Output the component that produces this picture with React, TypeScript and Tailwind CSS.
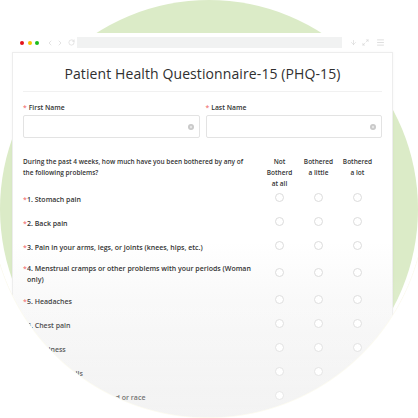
import React from 'react';
import { ChevronLeft, ChevronRight, RotateCw, ArrowDown, Maximize2, Menu } from 'lucide-react';

const problems = [
  { label: '1. Stomach pain' },
  { label: '2. Back pain' },
  { label: '3. Pain in your arms, legs, or joints (knees, hips, etc.)' },
  { label: '4. Menstrual cramps or other problems with your periods (Woman only)' },
  { label: '5. Headaches' },
  { label: '6. Chest pain' },
  { label: '7. Dizziness' },
  { label: '8. Fainting spells' },
  { label: '9. Feeling your heart pound or race' },
];

function ClearIcon() {
  return (
    <svg width="6" height="6" viewBox="0 0 10 10" className="shrink-0">
      <circle cx="5" cy="5" r="5" fill="#c9c9c9" />
      <circle cx="5" cy="5" r="2" fill="#e6e6e6" />
    </svg>
  );
}

function Radio() {
  return <div className="w-[9px] h-[9px] rounded-full border border-[#dcdcdc] bg-white mx-auto -translate-y-[2px]"></div>;
}

export default function App() {
  return (
    <div className="relative w-[418px] h-[418px] overflow-hidden bg-white font-['Open_Sans',sans-serif]">
      {/* Green backdrop */}
      <div className="absolute inset-0 rounded-full bg-[#dbebc7]"></div>

      <div className="relative pt-[33px] pl-[12px]">
        <div className="w-[381px]">
          {/* Browser bar */}
          <div className="h-[19px] bg-white flex items-center px-[8px] gap-[2px]">
            <div className="flex items-center gap-[3.5px] mr-[5px]">
              <span className="w-[4px] h-[4px] rounded-full bg-[#e3141b]"></span>
              <span className="w-[4px] h-[4px] rounded-full bg-[#f6c500]"></span>
              <span className="w-[4px] h-[4px] rounded-full bg-[#1dbd1d]"></span>
            </div>
            <ChevronLeft size={8} strokeWidth={1.5} className="text-[#c6c6c6]" />
            <ChevronRight size={8} strokeWidth={1.5} className="text-[#c6c6c6]" />
            <RotateCw size={7} strokeWidth={1.5} className="text-[#c6c6c6] ml-[2px]" />
            <div className="h-[11px] w-[265px] bg-[#f1f2f2]"></div>
            <ArrowDown size={7} strokeWidth={1.5} className="text-[#c6c6c6] ml-[6px]" />
            <Maximize2 size={7} strokeWidth={1.5} className="text-[#c6c6c6] ml-[3px]" />
            <Menu size={9} strokeWidth={1.5} className="text-[#c6c6c6] ml-[5px]" />
          </div>

          {/* Form card */}
          <div className="bg-[linear-gradient(to_bottom,#ffffff_52%,#ededed_100%)] border border-[#ededed] shadow-[0_0_3px_rgba(0,0,0,0.04)] px-[10px] h-[366px] overflow-hidden">
            <div className="pt-[11px] pb-[7px] border-b border-[#f1f1f1] text-center">
              <h1 className="text-[14px] leading-[20px] text-[#2f2f2f] tracking-[0.1px]">Patient Health Questionnaire-15 (PHQ-15)</h1>
            </div>

            <div className="grid grid-cols-2 gap-x-[6px] mt-[11px]">
              {['First Name', 'Last Name'].map((name) => (
                <div key={name}>
                  <div className="text-[6.8px] leading-[10px] font-semibold text-[#333] flex items-center">
                    <span className="text-[#f27b7b] mr-[2px]">*</span>
                    {name}
                  </div>
                  <div className="mt-[2px] h-[23px] border border-[#e3e3e3] rounded-[2px] flex items-center justify-end pr-[5px]">
                    <ClearIcon />
                  </div>
                </div>
              ))}
            </div>

            <div className="grid grid-cols-[1fr_39px_39px_39px] mr-[5px] mt-[18px] text-[6.5px] leading-[11px] font-semibold text-[#333]">
              <div className="pr-[6px]">During the past 4 weeks, how much have you been bothered by any of the following problems?</div>
              <div className="text-center px-[4px]">Not Botherd at all</div>
              <div className="text-center px-[4px]">Bothered a little</div>
              <div className="text-center px-[4px]">Bothered a lot</div>
            </div>

            <div className="mr-[5px] -mt-[2px] flex flex-col">
              {problems.map((p) => (
                <div key={p.label} className="grid grid-cols-[1fr_39px_39px_39px] items-center min-h-[24px] py-[4px] text-[7px] leading-[11px] font-semibold text-[#333]">
                  <div className="flex pr-[2px]">
                    <span className="text-[#f27b7b] w-[4px] shrink-0">*</span>
                    <span>{p.label}</span>
                  </div>
                  <Radio />
                  <Radio />
                  <Radio />
                </div>
              ))}
            </div>
          </div>
        </div>
      </div>

      {/* Bottom fade */}
      <div className="absolute inset-0 bg-[linear-gradient(to_bottom,transparent_65%,rgba(255,255,255,0.35)_100%)] pointer-events-none"></div>
      {/* White outside the lower arc */}
      <div className="absolute left-0 top-[200px] w-[418px] h-[218px] bg-[radial-gradient(circle_at_208px_0px,transparent_217px,#fbfaf0_217.6px,#ffffff_218.6px)] pointer-events-none"></div>
    </div>
  );
}
